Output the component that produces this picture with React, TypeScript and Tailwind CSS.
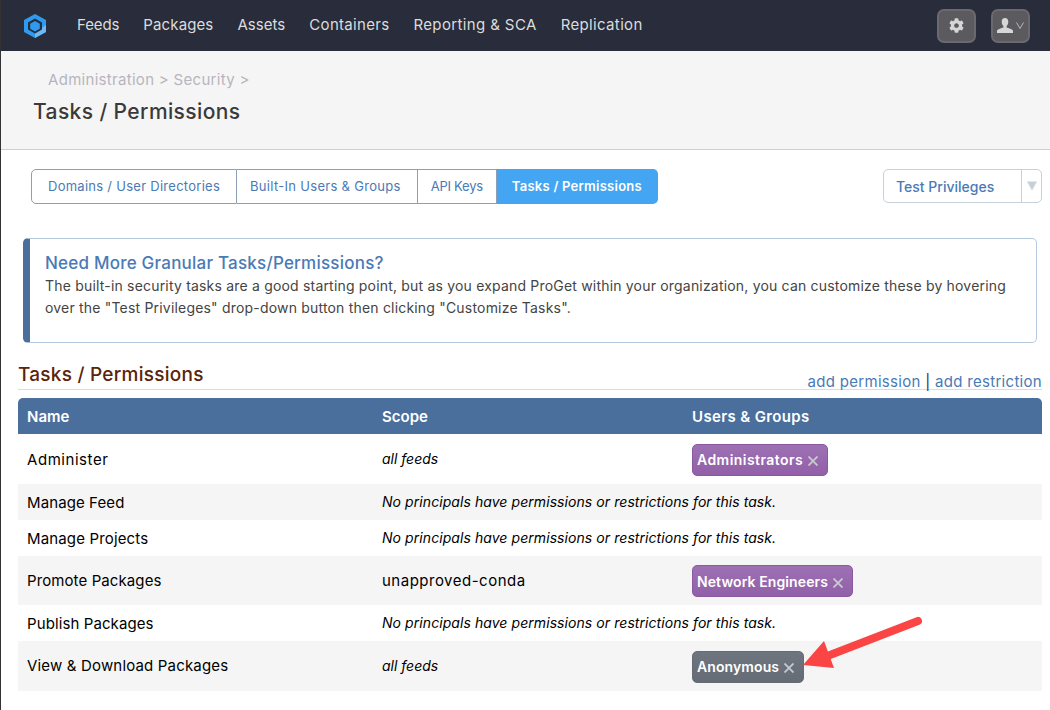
import React from "react";
import { FaCog } from "react-icons/fa";

const F = { fontFamily: '"Inter", "Open Sans", sans-serif' } as const;

function Logo() {
  return (
    <svg width="24" height="25" viewBox="0 0 24 25" className="block">
      <path d="M12 1 L23 7 V19 L12 25 L1 19 V7 Z" fill="#2f9bf0" />
      <path d="M23 12 V19 L12 25 V20 Z" fill="#6db9f4" />
      <path d="M12 5.500 L19 9.500 V16.500 L12 20.500 L5 16.500 V9.500 Z" fill="#282c3b" />
      <path d="M12 8 L16.800 10.800 V15.700 L12 18.500 L7.200 15.700 V10.800 Z" fill="#2f9bf0" />
    </svg>
  );
}

function User() {
  return (
    <svg width="16" height="15" viewBox="0 0 16 15" fill="#d6d6d6">
      <path d="M8 0c2.200 0 3.300 1.500 3.300 3.700 0 1.800-.7 3.300-1.700 4.200v1.500c2 .7 5.400 1.500 6.400 3V15H0v-2.600c1-1.500 4.400-2.300 6.400-3V7.900C5.400 7 4.700 5.500 4.700 3.700 4.700 1.500 5.800 0 8 0z" />
    </svg>
  );
}

function Chip({ label, color, track }: { label: string; color: string; track: string }) {
  return (
    <span className={`inline-flex items-center h-[32px] px-[4px] rounded-[5px] border text-white font-semibold text-[14px] ${color}`}>
      <span className={track}>{label}</span>
      <svg width="10" height="10" viewBox="0 0 10 10" className="ml-[5px] mt-[3px]" stroke="#c9c9d0" strokeWidth="1.800">
        <path d="M0.500 0.500 L9.500 9.500 M9.500 0.500 L0.500 9.500" />
      </svg>
      <span className="w-[5px]" />
    </span>
  );
}

const purple = "bg-[linear-gradient(#9d70b3,#9260a8)] border-[#8a5aa0]";
const grey = "bg-[linear-gradient(#6e757e,#656c75)] border-[#656c75]";

const rows: { n: string; t: string; s?: string; italic?: boolean; none?: boolean; chip?: [string, string, string]; h: string; alt: boolean }[] = [
  { n: "Administer", t: "pt-[2px] tracking-[0.55px]", s: "all feeds", italic: true, chip: ["Administrators", purple, "tracking-[0.45px]"], h: "h-[50px]", alt: false },
  { n: "Manage Feed", t: "pt-[2px] tracking-[0.1px]", none: true, h: "h-[36px]", alt: true },
  { n: "Manage Projects", t: "pt-[2px] tracking-[0.15px]", none: true, h: "h-[36px]", alt: false },
  { n: "Promote Packages", t: "pt-[2px] tracking-[0.1px]", s: "unapproved-conda", chip: ["Network Engineers", purple, "tracking-[0.1px]"], h: "h-[49px]", alt: true },
  { n: "Publish Packages", t: "pt-[2px] tracking-[0.1px]", none: true, h: "h-[36px]", alt: false },
  { n: "View & Download Packages", t: "pt-[1px] tracking-[0.17px]", s: "all feeds", italic: true, chip: ["Anonymous", grey, "tracking-[0.1px]"], h: "h-[50px]", alt: true },
];

const tabs: [string, string][] = [
  ["Domains / User Directories", "tracking-[0.27px] px-[16px] rounded-l-[5px]"],
  ["Built-In Users & Groups", "tracking-[0.3px] pl-[13px] pr-[16px] border-l-0"],
  ["API Keys", "tracking-[-0.25px] px-[13px] border-l-0"],
];

export default function App() {
  return (
    <div style={F} className="relative w-[1050px] h-[710px] overflow-hidden bg-white text-[15px] text-black border-l border-[#333]">
      <nav className="h-[51px] bg-[#282c3b] flex items-center pl-[22px] pr-[20px]">
        <Logo />
        <div className="flex gap-[24px] ml-[30px] text-[#dcdcdc] text-[15px]">
          <span className="tracking-[-0.1px]">Feeds</span>
          <span className="tracking-[0.12px]">Packages</span>
          <span className="tracking-[0.05px]">Assets</span>
          <span className="tracking-[0.3px]">Containers</span>
          <span className="tracking-[0.38px]">Reporting &amp; SCA</span>
          <span className="tracking-[0.35px]">Replication</span>
        </div>
        <div className="ml-auto flex gap-[15px]">
          <div className="w-[39px] h-[34px] rounded-[7px] bg-[#5a5a5f] border-2 border-[#6a6a6e] flex items-center justify-center">
            <FaCog size={15} color="#d6d6d6" />
          </div>
          <div className="w-[39px] h-[34px] rounded-[7px] bg-[#5a5a5f] border-2 border-[#6a6a6e] flex items-center justify-center gap-[3px]">
            <User />
            <svg width="8" height="7" viewBox="0 0 8 7" fill="none" stroke="#b8b8b8" strokeWidth="1"><path d="M0.500 0.500 L4 6.500 L7.500 0.500" /></svg>
          </div>
        </div>
      </nav>

      <header className="h-[99px] bg-[#f5f5f5] border-b border-[#cfcfcf] pl-[32px] pt-[19px]">
        <div className="pl-[15px] text-[#b5b5bd] text-[15px] leading-[20px] tracking-[0.3px]">Administration &gt; Security &gt;</div>
        <h1 className="mt-[10px] text-[21px] leading-[24px] font-medium text-[#3a3a3a] tracking-[0.4px]">Tasks / Permissions</h1>
      </header>

      <div className="flex items-start justify-between pl-[30px] pr-[8px] mt-[19px]">
        <div className="flex h-[35px] text-[13px] text-[#4a7ab5]">
          {tabs.map(([t, tr]) => (
            <span key={t} className={`flex items-center border border-[#8c9fb5] ${tr}`}>{t}</span>
          ))}
          <span className="flex items-center pl-[15px] pr-[16px] bg-[#44a6f2] text-white font-semibold rounded-r-[5px] tracking-[0.25px]">Tasks / Permissions</span>
        </div>
        <div className="flex h-[34px] w-[159px] border border-[#c5d2da] rounded-[5px] text-[14px] text-[#4a7ab5] font-medium">
          <span className="flex-1 flex items-center pl-[12px] border-r border-[#c5d2da]">Test Privileges</span>
          <span className="w-[19px] flex items-center justify-center">
            <svg width="10" height="10" viewBox="0 0 10 10"><path d="M0 0.500H10L5 9.500Z" fill="#c5d2da" /></svg>
          </span>
        </div>
      </div>

      <section className="mt-[34px] ml-[22px] w-[1014px] h-[105px] border border-[#b5c9de] border-l-[7px] border-l-[#4a6f9c] rounded-[5px] pl-[15px] pr-[20px] pt-[14px]">
        <h3 className="text-[17px] leading-[20px] font-medium text-[#4a7ab5] tracking-[0.22px]">Need More Granular Tasks/Permissions?</h3>
        <p className="text-[14px] leading-[22px] text-[#444] mt-[2px] tracking-[0.19px]">
          The built-in security tasks are a good starting point, but as you expand ProGet within your organization, you can customize these by hovering over the "Test Privileges" drop-down button then clicking "Customize Tasks".
        </p>
      </section>

      <div className="ml-[17px] w-[1024px] mt-[19px] h-[28px] border-b border-[#dcdcdc] flex items-end justify-between">
        <h2 className="text-[19px] leading-[25px] mb-[2px] font-medium text-[#5b2308] tracking-[0.25px]">Tasks / Permissions</h2>
        <div className="text-[15px] leading-[17px] mb-[-1px] text-[#4a7ab5] tracking-[0.3px]">add permission <span className="text-[#333]">|</span> add restriction</div>
      </div>

      <div className="ml-[17px] w-[1024px] mt-[8px]">
        <div className="h-[36px] pt-[3px] bg-[#4a6f9c] rounded-t-[5px] text-white font-semibold text-[15px] grid grid-cols-[364px_310px_1fr] items-center">
          <span className="pl-[9px]">Name</span>
          <span>Scope</span>
          <span className="tracking-[0.35px]">Users &amp; Groups</span>
        </div>
        {rows.map((r) => (
          <div key={r.n} className={`${r.h} ${r.alt ? "bg-[#f5f5f5]" : "bg-white"} grid grid-cols-[364px_310px_1fr] items-center text-[15px]`}>
            <span className={`pl-[9px] ${r.t}`}>{r.n}</span>
            {r.none ? (
              <span className="col-span-2 italic text-[14px] tracking-[0.07px] pb-[1px]">No principals have permissions or restrictions for this task.</span>
            ) : (
              <>
                <span className={r.italic ? "italic text-[14px] pb-[1px]" : "tracking-[0.5px] pt-[2px]"}>{r.s}</span>
                <span className="flex pt-[1px]">{r.chip && <Chip label={r.chip[0]} color={r.chip[1]} track={r.chip[2]} />}</span>
              </>
            )}
          </div>
        ))}
      </div>

      <svg className="absolute left-[799px] top-[612px]" width="125" height="60" viewBox="0 0 125 60">
        <path d="M118 9 L30 43" stroke="#fb4444" strokeWidth="8" strokeLinecap="round" fill="none" />
        <path d="M3 53 L24 29 L34 56 Z" fill="#fb4444" />
      </svg>
    </div>
  );
}
